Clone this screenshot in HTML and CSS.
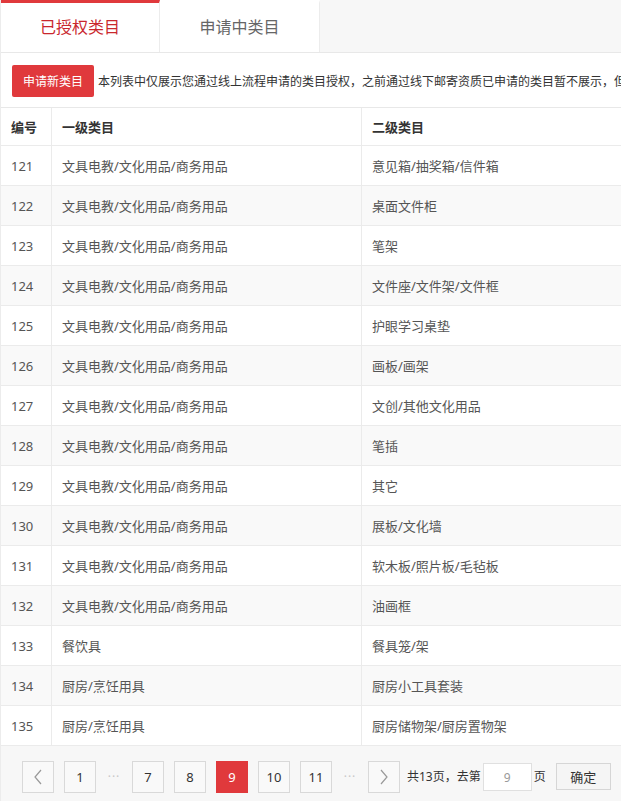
FILE: index.html
```html
<!DOCTYPE html>
<html lang="zh-CN">
<head>
<meta charset="utf-8">
<title>已授权类目</title>
<link rel="stylesheet" href="styles.css">
</head>
<body>
<div class="page">
  <div class="tabs">
    <div class="tab active">已授权类目</div>
    <div class="tab">申请中类目</div>
  </div>
  <div class="notice">
    <button class="btn-apply">申请新类目</button>
    <span class="notice-text">本列表中仅展示您通过线上流程申请的类目授权，之前通过线下邮寄资质已申请的类目暂不展示，但不影响您正常发布商品</span>
  </div>
  <table class="grid">
    <thead>
      <tr><th class="c-id">编号</th><th class="c-one">一级类目</th><th class="c-two">二级类目</th></tr>
    </thead>
    <tbody>
      <tr><td>121</td><td>文具电教/文化用品/商务用品</td><td>意见箱/抽奖箱/信件箱</td></tr>
      <tr><td>122</td><td>文具电教/文化用品/商务用品</td><td>桌面文件柜</td></tr>
      <tr><td>123</td><td>文具电教/文化用品/商务用品</td><td>笔架</td></tr>
      <tr><td>124</td><td>文具电教/文化用品/商务用品</td><td>文件座/文件架/文件框</td></tr>
      <tr><td>125</td><td>文具电教/文化用品/商务用品</td><td>护眼学习桌垫</td></tr>
      <tr><td>126</td><td>文具电教/文化用品/商务用品</td><td>画板/画架</td></tr>
      <tr><td>127</td><td>文具电教/文化用品/商务用品</td><td>文创/其他文化用品</td></tr>
      <tr><td>128</td><td>文具电教/文化用品/商务用品</td><td>笔插</td></tr>
      <tr><td>129</td><td>文具电教/文化用品/商务用品</td><td>其它</td></tr>
      <tr><td>130</td><td>文具电教/文化用品/商务用品</td><td>展板/文化墙</td></tr>
      <tr><td>131</td><td>文具电教/文化用品/商务用品</td><td>软木板/照片板/毛毡板</td></tr>
      <tr><td>132</td><td>文具电教/文化用品/商务用品</td><td>油画框</td></tr>
      <tr><td>133</td><td>餐饮具</td><td>餐具笼/架</td></tr>
      <tr><td>134</td><td>厨房/烹饪用具</td><td>厨房小工具套装</td></tr>
      <tr><td>135</td><td>厨房/烹饪用具</td><td>厨房储物架/厨房置物架</td></tr>
    </tbody>
  </table>
  <div class="pager">
    <a class="pg arrow" href="#"><svg width="10" height="16" viewBox="0 0 10 16"><path d="M8 1 L2 8 L8 15" fill="none" stroke="#999" stroke-width="1.2"/></svg></a>
    <a class="pg" href="#">1</a>
    <span class="dots">···</span>
    <a class="pg" href="#">7</a>
    <a class="pg" href="#">8</a>
    <a class="pg current" href="#">9</a>
    <a class="pg" href="#">10</a>
    <a class="pg" href="#">11</a>
    <span class="dots">···</span>
    <a class="pg arrow next" href="#"><svg width="10" height="16" viewBox="0 0 10 16"><path d="M2 1 L8 8 L2 15" fill="none" stroke="#999" stroke-width="1.2"/></svg></a>
    <span class="total">共13页，去第</span>
    <input class="goto" type="text" value="9">
    <span class="unit">页</span>
    <button class="confirm">确定</button>
  </div>
</div>
</body>
</html>
```
FILE: styles.css
```css
html, body {
  margin: 0;
  padding: 0;
  overflow: hidden;
  background: #fff;
}
body {
  font-family: "Noto Sans", "Noto Sans CJK SC", sans-serif;
  color: #666;
}
.page {
  width: 900px;
  border-left: 1px solid #ececec;
}
.tabs {
  display: flex;
  height: 52px;
  background: #f7f7f7;
  border-bottom: 1px solid #e8e8e8;
}
.tab {
  width: 159px;
  background: #fff;
  border-right: 1px solid #ececec;
  box-sizing: border-box;
  font-size: 16px;
  text-align: center;
  color: #666;
  border-top: 3px solid transparent;
  line-height: 49px;
}
.tab + .tab { width: 160px; }
.tab.active {
  color: #c9272d;
  border-top-color: #e0393c;
}
.notice {
  display: flex;
  align-items: center;
  gap: 4px;
  padding: 12px 0 10px 11px;
  white-space: nowrap;
  border-bottom: 1px solid #e8e8e8;
}
.btn-apply {
  width: 82px;
  height: 32px;
  padding: 0;
  border: none;
  border-radius: 2px;
  background: #e0393c;
  color: #fff;
  font-family: inherit;
  font-size: 12px;
}
.notice-text {
  font-size: 12px;
  color: #333;
}
.grid {
  border-collapse: collapse;
  table-layout: fixed;
  width: 899px;
  font-size: 13px;
}
.grid th, .grid td {
  text-align: left;
  padding: 0 0 0 10px;
  border-bottom: 1px solid #ebebeb;
  border-right: 1px solid #ebebeb;
  white-space: nowrap;
}
.grid th {
  height: 37px;
  color: #333;
  font-weight: bold;
}
.grid td {
  height: 39px;
  color: #555;
}
.c-id { width: 40px; }
.c-one { width: 299px; }
.grid tbody tr:nth-child(even) td { background: #f9f9f9; }
.pager {
  display: flex;
  align-items: flex-start;
  height: 56px;
  padding: 15px 0 0 21px;
  background: #f7f7f7;
  font-size: 12px;
  color: #333;
}
.pg {
  width: 30px;
  height: 30px;
  border: 1px solid #d9d9d9;
  background: #f9f9f9;
  margin-right: 10px;
  display: flex;
  align-items: center;
  justify-content: center;
  text-decoration: none;
  color: #333;
  font-size: 13px;
}
.pg.current {
  background: #e0393c;
  border-color: #e0393c;
  color: #fff;
}
.dots {
  width: 16px;
  margin-right: 10px;
  line-height: 32px;
  color: #c8c8c8;
  font-size: 12px;
  text-align: center;
  letter-spacing: 1px;
}
.pg.next { margin-right: 7px; }
.total, .unit {
  line-height: 32px;
  font-size: 12px;
}
.goto {
  width: 47px;
  height: 26px;
  margin: 2px 2px 0 2px;
  padding: 0;
  border: 1px solid #e0e0e0;
  background: #fff;
  text-align: center;
  font-family: inherit;
  font-size: 12px;
  color: #999;
}
.unit { margin-right: 10px; }
.confirm {
  width: 55px;
  height: 27px;
  margin-top: 2px;
  padding: 0;
  border: 1px solid #d6d6d6;
  background: #f5f5f5;
  font-family: inherit;
  font-size: 13px;
  color: #333;
}
```
